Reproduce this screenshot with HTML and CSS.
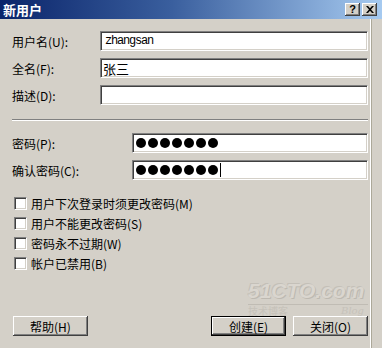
FILE: index.html
```html
<!DOCTYPE html>
<html>
<head>
    <title>新用户</title>
    <link rel="stylesheet" href="styles.css">
</head>
<body>
    <div class="titlebar">
        <span class="title">新用户</span>
        <div class="tb-buttons">
            <div class="tb-btn">?</div>
            <div class="tb-btn">
                <svg width="8" height="7" viewBox="0 0 8 7"><path d="M0 0h2l2 2.2L6 0h2L5 3.5 8 7H6L4 4.8 2 7H0l3-3.5z" fill="#000"/></svg>
            </div>
        </div>
    </div>

    <div class="dialog">
        <div class="fields">
            <label>用户名(U):</label>
            <div class="field mono">zhangsan</div>
            <label>全名(F):</label>
            <div class="field cjk">张三</div>
            <label>描述(D):</label>
            <div class="field"></div>
        </div>

        <div class="sep"></div>

        <div class="fields wide">
            <label>密码(P):</label>
            <div class="field dots">
                <span class="dot"></span><span class="dot"></span><span class="dot"></span><span class="dot"></span><span class="dot"></span><span class="dot"></span><span class="dot"></span>
            </div>
            <label>确认密码(C):</label>
            <div class="field dots">
                <span class="dot"></span><span class="dot"></span><span class="dot"></span><span class="dot"></span><span class="dot"></span><span class="dot"></span><span class="dot"></span><span class="caret"></span>
            </div>
        </div>

        <div class="checks">
            <div class="check"><span class="box"></span>用户下次登录时须更改密码(M)</div>
            <div class="check"><span class="box"></span>用户不能更改密码(S)</div>
            <div class="check"><span class="box"></span>密码永不过期(W)</div>
            <div class="check"><span class="box"></span>帐户已禁用(B)</div>
        </div>

        <div class="buttons">
            <div class="btn">帮助(H)</div>
            <div class="spacer"></div>
            <div class="btn default">创建(E)</div>
            <div class="btn">关闭(O)</div>
        </div>
    </div>

    <div class="watermark">
        <div class="wm-logo">51CTO.com</div>
        <div class="wm-line"></div>
        <div class="wm-sub"><span>技术博客</span><span class="wm-blog">Blog</span></div>
    </div>
</body>
</html>
```

FILE: styles.css
```css
body {
    margin: 0;
    width: 382px;
    height: 348px;
    overflow: hidden;
    position: relative;
    background: #d4d0c8;
    font-family: "Noto Sans CJK SC", sans-serif;
    font-size: 12px;
    color: #000;
}
.titlebar {
    height: 19px;
    display: flex;
    align-items: center;
    justify-content: space-between;
    padding: 0 5px 0 3px;
    background: linear-gradient(to right, #0a246a, #3a5f9e 45%, #a6caf0);
}
.title {
    color: #fff;
    font-weight: bold;
    font-size: 13px;
    line-height: 19px;
}
.tb-buttons {
    display: flex;
    gap: 2px;
}
.tb-btn {
    width: 15px;
    height: 13px;
    background: #d4d0c8;
    box-shadow: inset -1px -1px #404040, inset 1px 1px #fff, inset -2px -2px #808080;
    display: flex;
    align-items: center;
    justify-content: center;
    font-family: "Liberation Sans", sans-serif;
    font-weight: bold;
    font-size: 11px;
    line-height: 13px;
}
.dialog {
    box-sizing: border-box;
    width: 371px;
    height: 329px;
    padding: 12px 2px 12px 12px;
    border-right: 1px solid #fff;
    box-shadow: 1px 0 0 #aca899;
    display: flex;
    flex-direction: column;
}
.fields {
    display: grid;
    grid-template-columns: 88px 1fr;
    row-gap: 7px;
    align-items: center;
}
.fields.wide {
    grid-template-columns: 120px 1fr;
}
.field {
    box-sizing: border-box;
    height: 20px;
    background: #fff;
    border-top: 1px solid #808080;
    border-left: 1px solid #808080;
    border-right: 1px solid #fff;
    border-bottom: 1px solid #fff;
    box-shadow: inset 1px 1px #404040, inset -1px -1px #d4d0c8;
    padding: 0 3px;
    display: flex;
    align-items: center;
    white-space: nowrap;
}
.mono {
    font-family: "Liberation Mono", monospace;
    letter-spacing: -1.2px;
    padding-left: 4px;
}
.cjk {
    font-size: 13px;
    padding-left: 2px;
}
.dots {
    gap: 2px;
    padding-left: 3px;
}
.dot {
    width: 10px;
    height: 10px;
    border-radius: 50%;
    background: #000;
}
.caret {
    width: 1px;
    height: 14px;
    background: #000;
}
.sep {
    border-top: 1px solid #808080;
    border-bottom: 1px solid #fff;
    margin: 14px 0 12px 0;
}
.checks {
    margin-top: 13px;
    display: flex;
    flex-direction: column;
}
.check {
    height: 20px;
    display: flex;
    align-items: center;
    gap: 4px;
    padding-left: 2px;
}
.box {
    box-sizing: border-box;
    width: 13px;
    height: 13px;
    background: #fff;
    border-top: 1px solid #808080;
    border-left: 1px solid #808080;
    border-right: 1px solid #fff;
    border-bottom: 1px solid #fff;
    box-shadow: inset 1px 1px #404040, inset -1px -1px #d4d0c8;
}
.buttons {
    margin-top: auto;
    display: flex;
    gap: 7px;
    padding-left: 1px;
}
.spacer {
    flex: 1;
}
.btn {
    box-sizing: border-box;
    width: 75px;
    height: 20px;
    display: flex;
    align-items: center;
    justify-content: center;
    background: #d4d0c8;
    box-shadow: inset -1px -1px #404040, inset 1px 1px #fff, inset -2px -2px #808080;
}
.btn.default {
    border: 1px solid #000;
}
.watermark {
    position: absolute;
    left: 248px;
    top: 279px;
    width: 120px;
    color: #dad6cf;
    pointer-events: none;
}
.wm-logo {
    font-family: "Liberation Sans", sans-serif;
    font-weight: bold;
    font-style: italic;
    font-size: 21px;
    line-height: 24px;
    white-space: nowrap;
    text-shadow: 1px 1px 0 #bdb9b1, -1px -1px 0 #c4c0b8;
}
.wm-line {
    height: 1px;
    background: #c0bcb4;
    margin-top: 1px;
}
.wm-sub {
    display: flex;
    justify-content: space-between;
    font-size: 10px;
    line-height: 12px;
    color: #c6c2ba;
    padding-right: 4px;
}
.wm-blog {
    font-family: "DejaVu Serif", serif;
    font-style: italic;
}
```
